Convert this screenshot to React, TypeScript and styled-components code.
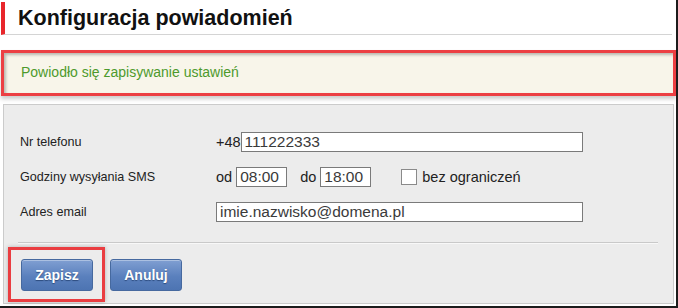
import React from "react";
import styled, { createGlobalStyle } from "styled-components";

const GlobalStyle = createGlobalStyle`
  html, body {
    margin: 0;
    padding: 0;
    background: #ffffff;
    font-family: "Liberation Sans", Arial, sans-serif;
  }
`;

const Frame = styled.div`
  width: 678px;
  height: 308px;
  box-sizing: border-box;
  border-right: 2px solid #1c1c1c;
  border-bottom: 2px solid #1c1c1c;
  padding-top: 2px;
  overflow: hidden;
`;

const Header = styled.div`
  height: 32px;
  margin: 0 4px 0 1px;
  display: flex;
  align-items: center;
  border-left: 4px solid #e8262b;
  border-bottom: 1px solid #d4d4d4;
  padding-left: 13px;
  font-size: 21.5px;
  font-weight: bold;
  color: #111111;
`;

const Notice = styled.div`
  margin: 15px 0 0 1px;
  height: 46px;
  box-sizing: border-box;
  border: 3px solid #ec3f43;
  background: #f8f5ea;
  box-shadow: inset 2px 2px 3px rgba(0, 0, 0, 0.25), 0 3px 4px rgba(0, 0, 0, 0.2);
  display: flex;
  align-items: center;
  padding: 0 0 2px 17px;
  font-size: 14px;
  color: #4d9a2c;
`;

const Panel = styled.div`
  margin: 8px 2px 0 3px;
  height: 200px;
  box-sizing: border-box;
  border: 1px solid #cbcbcb;
  background: #ececec;
  padding: 27px 15px 0 16px;
`;

const Rows = styled.div`
  display: grid;
  grid-template-columns: 196px 1fr;
  row-gap: 15px;
  align-items: center;
`;

const Label = styled.div`
  font-size: 12.6px;
  color: #222222;
`;

const Value = styled.div`
  display: flex;
  align-items: center;
  font-size: 14.5px;
  color: #222222;
  height: 20px;
`;

const TextBox = styled.div<{ $w: number; $ml?: number }>`
  width: ${(p) => p.$w}px;
  height: 20px;
  box-sizing: border-box;
  margin-left: ${(p) => p.$ml ?? 0}px;
  border: 1px solid #7a7a7a;
  background: #ffffff;
  padding: 0 3px;
  display: flex;
  align-items: center;
  font-size: 15.5px;
  color: #3a3a3a;
  white-space: nowrap;
  overflow: hidden;
`;

const Word = styled.span<{ $ml?: number }>`
  margin-left: ${(p) => p.$ml ?? 0}px;
`;

const Check = styled.span`
  width: 16px;
  height: 16px;
  box-sizing: border-box;
  margin: 0 5px 0 30px;
  border: 1px solid #8a8a8a;
  background: #ffffff;
`;

const Separator = styled.div`
  margin: 20px 0 0 -2px;
  height: 1px;
  background: #c9c9c9;
  border-bottom: 1px solid #f8f8f8;
`;

const Actions = styled.div`
  display: flex;
  align-items: center;
  margin: 3px 0 0 -12px;
`;

const Highlight = styled.div`
  border: 3px solid #ea3d41;
  padding: 9px 9px 8px 10px;
  box-shadow: 0 0 4px rgba(0, 0, 0, 0.25);
`;

const Button = styled.button<{ $ml?: number }>`
  width: 72px;
  height: 32px;
  margin-left: ${(p) => p.$ml ?? 0}px;
  border: 1px solid #46699f;
  border-radius: 3px;
  background: linear-gradient(#809fd2, #5a80bd 55%, #4d74b2);
  box-shadow: inset 0 1px 0 rgba(255, 255, 255, 0.35);
  font-family: "Liberation Sans", Arial, sans-serif;
  font-size: 14px;
  font-weight: bold;
  color: #ffffff;
  text-shadow: 0 1px 1px #2c4b7e;
  padding: 0;
`;

export default function App() {
  return (
    <Frame>
      <GlobalStyle />
      <Header>Konfiguracja powiadomień</Header>
      <Notice>Powiodło się zapisywanie ustawień</Notice>
      <Panel>
        <Rows>
          <Label>Nr telefonu</Label>
          <Value>
            +48
            <TextBox $w={342}>111222333</TextBox>
          </Value>
          <Label>Godziny wysyłania SMS</Label>
          <Value>
            od
            <TextBox $w={51} $ml={4}>08:00</TextBox>
            <Word $ml={13}>do</Word>
            <TextBox $w={51} $ml={4}>18:00</TextBox>
            <Check />
            bez ograniczeń
          </Value>
          <Label>Adres email</Label>
          <Value>
            <TextBox $w={367}>imie.nazwisko@domena.pl</TextBox>
          </Value>
        </Rows>
        <Separator />
        <Actions>
          <Highlight>
            <Button>Zapisz</Button>
          </Highlight>
          <Button $ml={5}>Anuluj</Button>
        </Actions>
      </Panel>
    </Frame>
  );
}
